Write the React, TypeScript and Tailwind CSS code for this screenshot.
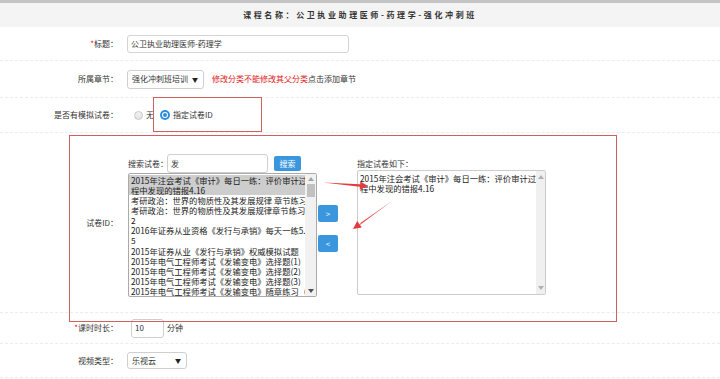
import React from 'react';

const LIST: string[][] = [
  ['2015年注会考试《审计》每日一练：评价审计过', '程中发现的错报4.16'],
  ['考研政治：世界的物质性及其发展规律 章节练习'],
  ['考研政治：世界的物质性及其发展规律章节练习', '2'],
  ['2016年证券从业资格《发行与承销》每天一练5.', '5'],
  ['2015年证券从业《发行与承销》权威模拟试题'],
  ['2015年电气工程师考试《发输变电》选择题(1)'],
  ['2015年电气工程师考试《发输变电》选择题(2)'],
  ['2015年电气工程师考试《发输变电》选择题(3)'],
  ['2015年电气工程师考试《发输变电》随章练习（', '4)'],
];

function Label({ text, req }: { text: string; req?: boolean }) {
  return (
    <div className="text-right text-[8px] text-[#333] whitespace-nowrap">
      {req && <span className="text-[#e02020]">*</span>}
      {text}
    </div>
  );
}

function FakeSelect({ value, w }: { value: string; w: string }) {
  return (
    <div className={`${w} h-full flex items-center justify-between border border-[#cfcfcf] rounded-[3px] bg-white pl-[4px] pr-[5px] text-[8px] text-[#333]`}>
      <span>{value}</span>
      <span className="text-[6px] text-[#222]">▼</span>
    </div>
  );
}

function ScrollArrow({ up, color }: { up?: boolean; color: string }) {
  return (
    <svg width="6" height="4" viewBox="0 0 6 4" className="mx-auto">
      <path d={up ? 'M0 4 L3 0 L6 4 Z' : 'M0 0 L3 4 L6 0 Z'} fill={color} />
    </svg>
  );
}

export default function App() {
  return (
    <div
      className="relative w-[720px] h-[379px] overflow-hidden bg-white"
      style={{ fontFamily: '"Noto Sans CJK SC", "Noto Sans", sans-serif' }}
    >
      <div className="h-[27px] border-t-[3px] border-[#c4c4c4] bg-[#f4f4f4] flex items-center justify-center text-[8px] font-bold tracking-[2.6px] text-[#333]">
        课程名称：公卫执业助理医师-药理学-强化冲刺班
      </div>

      <div className="h-[34px] grid grid-cols-[118px_1fr] gap-x-[9px] items-center border-b border-dashed border-[#ececec]">
        <Label text="标题：" req />
        <div className="w-[222px] h-[18px] flex items-center border border-[#d4d4d4] rounded-[3px] pl-[3px] text-[8px] text-[#333]">
          公卫执业助理医师-药理学
        </div>
      </div>

      <div className="h-[37px] grid grid-cols-[118px_1fr] gap-x-[9px] items-center border-b border-dashed border-[#ececec]">
        <Label text="所属章节：" />
        <div className="flex items-center h-[19px]">
          <FakeSelect value="强化冲刺班培训" w="w-[77px]" />
          <span className="ml-[8px] text-[8px] text-[#e02020]">修改分类不能修改其父分类</span>
          <span className="text-[8px] text-[#333]">点击添加章节</span>
        </div>
      </div>

      <div className="h-[35px] grid grid-cols-[118px_1fr] gap-x-[9px] items-center border-b border-dashed border-[#ececec]">
        <Label text="是否有模拟试卷：" />
        <div className="flex items-center text-[8px] text-[#333] pl-[7px]">
          <span className="w-[9px] h-[9px] rounded-full border border-[#c8c8c8] bg-gradient-to-b from-[#f4f4f4] to-[#e2e2e2]" />
          <span className="ml-[3px]">无</span>
          <span className="ml-[6px] w-[10px] h-[10px] rounded-full bg-[#2d8ee0] flex items-center justify-center">
            <span className="w-[6px] h-[6px] rounded-full bg-white flex items-center justify-center">
              <span className="w-[4px] h-[4px] rounded-full bg-[#2d8ee0]" />
            </span>
          </span>
          <span className="ml-[3px]">指定试卷ID</span>
        </div>
      </div>

      <div className="h-[180px] grid grid-cols-[118px_1fr] gap-x-[9px] items-center border-b border-dashed border-[#ececec]">
        <Label text="试卷ID：" />
        <div className="self-start pt-[21px] flex items-start">
          <div className="ml-[1px] flex flex-col">
            <div className="flex items-center h-[19px]">
              <span className="w-[39px] text-[8px] text-[#333] whitespace-nowrap">搜索试卷：</span>
              <div className="w-[101px] h-[19px] flex items-center border border-[#cfcfcf] rounded-[3px] pl-[3px] text-[8px] text-[#333]">
                发
              </div>
              <div className="ml-[6px] w-[27px] h-[15px] flex items-center justify-center bg-[#3a96dd] rounded-[2px] text-[8px] text-white">
                搜索
              </div>
            </div>
            <div className="w-[189px] h-[124px] flex border border-[#aaaaaa] rounded-[2px] bg-white overflow-hidden">
              <div className="flex-1 overflow-hidden pt-[0.5px] text-[8.3px] leading-[10.15px] text-[#222]">
                {LIST.map((item, i) => (
                  <div key={i} className={i === 0 ? 'bg-[#cdcdcd]' : ''}>
                    {item.map((line, j) => (
                      <div key={j} className="pl-[2px] whitespace-nowrap overflow-hidden">
                        {line}
                      </div>
                    ))}
                  </div>
                ))}
              </div>
              <div className="w-[11px] bg-[#f1f1f1] flex flex-col items-center pt-[3px] pb-[3px]">
                <ScrollArrow up color="#a3a3a3" />
                <div className="mt-[3px] w-[8px] h-[13px] bg-[#c1c1c1]" />
                <div className="flex-1" />
                <ScrollArrow color="#505050" />
              </div>
            </div>
          </div>

          <div className="ml-[1px] mt-[51px] flex flex-col gap-[13px]">
            <div className="w-[20px] h-[17px] flex items-center justify-center bg-[#3a96dd] rounded-[2px] text-[8px] text-white">&gt;</div>
            <div className="w-[20px] h-[17px] flex items-center justify-center bg-[#3a96dd] rounded-[2px] text-[8px] text-white">&lt;</div>
          </div>

          <div className="ml-[19px] mt-[3px] flex flex-col">
            <div className="h-[13px] leading-[13px] text-[8px] text-[#333]">指定试卷如下：</div>
            <div className="w-[189px] h-[125px] flex border border-[#cccccc] rounded-[2px] bg-white overflow-hidden">
              <div className="flex-1 pt-[2px] pl-[2px] text-[8.3px] leading-[10px] text-[#222]">
                <div className="whitespace-nowrap overflow-hidden">2015年注会考试《审计》每日一练：评价审计过</div>
                <div>程中发现的错报4.16</div>
              </div>
              <div className="w-[11px] bg-[#f0f0f0] flex flex-col items-center pt-[4px] pb-[4px]">
                <ScrollArrow up color="#b0b0b0" />
                <div className="flex-1" />
                <ScrollArrow color="#b0b0b0" />
              </div>
            </div>
          </div>
        </div>
      </div>

      <div className="h-[31px] grid grid-cols-[118px_1fr] gap-x-[9px] items-center border-b border-dashed border-[#ececec]">
        <Label text="课时时长：" req />
        <div className="flex items-center pl-[4px]">
          <div className="w-[33px] h-[19px] flex items-center border border-[#cfcfcf] rounded-[3px] pl-[3px] text-[8px] text-[#333]">10</div>
          <span className="ml-[3px] text-[8px] text-[#333]">分钟</span>
        </div>
      </div>

      <div className="h-[34px] grid grid-cols-[118px_1fr] gap-x-[9px] items-center border-b border-dashed border-[#ececec]">
        <Label text="视频类型：" />
        <div className="h-[17px] flex">
          <FakeSelect value="乐视云" w="w-[60px]" />
        </div>
      </div>

      {/* annotation overlays */}
      <div className="absolute left-[69px] top-[135px] w-[548px] h-[187px] border border-[#d0605f]" />
      <svg className="absolute left-0 top-0 pointer-events-none" width="720" height="379">
        <rect x="153.5" y="97.5" width="108" height="34" fill="none" stroke="#d0605f" strokeWidth="1" />
        <path d="M323 182.5 L360 184.2 L360 186.8 Z" fill="#e33b3b" />
        <polygon points="368,186 359.7,189.8 360.3,181.5" fill="#e33b3b" />
        <path d="M392 201 L361.2 222.6 L358.8 225.8 Z" fill="#e33b3b" />
        <polygon points="353,229 357.2,221.1 361.8,227.6" fill="#e33b3b" />
      </svg>
    </div>
  );
}
